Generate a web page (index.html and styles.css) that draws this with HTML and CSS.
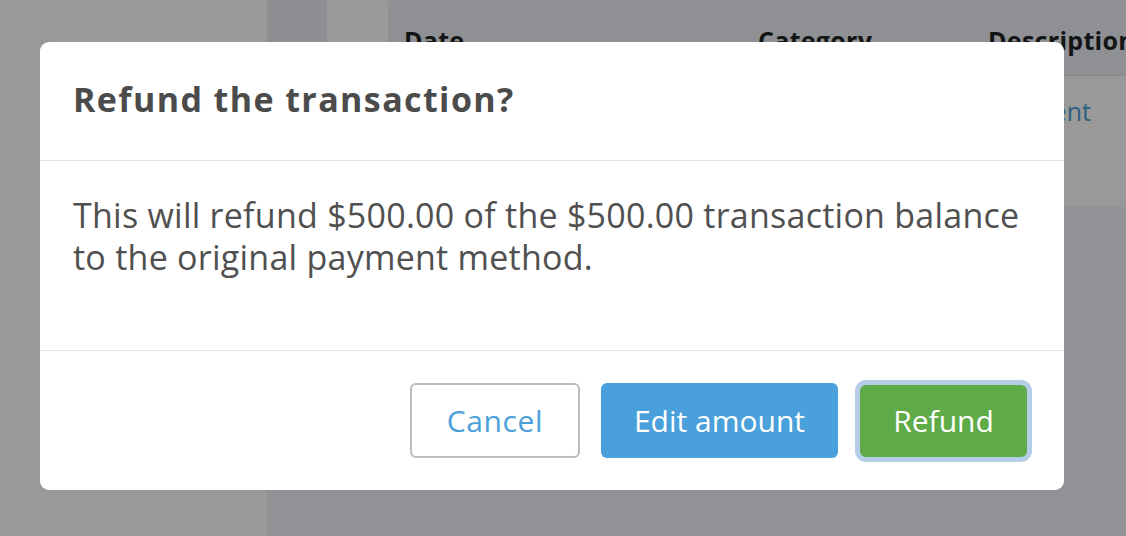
FILE: index.html
```html
<!DOCTYPE html>
<html lang="en">
<head>
<meta charset="utf-8">
<title>Refund the transaction?</title>
<link rel="stylesheet" href="styles.css">
</head>
<body>
<div class="app">
  <aside class="sidebar"></aside>
  <main class="main">
    <div class="rail"></div>
    <div class="pane"></div>
    <section class="card">
      <div class="card-head">
        <span class="col col-date">Date</span>
        <span class="col col-cat">Category</span>
        <span class="col col-desc">Description</span>
      </div>
      <div class="card-row">
        <span class="col col-date"></span>
        <span class="col col-cat"></span>
        <span class="col col-desc"><a class="link" href="#">Payment</a></span>
      </div>
    </section>
  </main>
</div>

<div class="overlay">
  <div class="modal" role="dialog" aria-labelledby="modal-title">
    <header class="modal-header">
      <h2 class="modal-title" id="modal-title">Refund the transaction?</h2>
    </header>
    <div class="modal-body">
      <p class="modal-text">This will refund $500.00 of the $500.00 transaction balance to the original payment method.</p>
    </div>
    <footer class="modal-footer">
      <button class="btn btn-cancel" type="button">Cancel</button>
      <button class="btn btn-edit" type="button">Edit amount</button>
      <button class="btn btn-refund" type="button">Refund</button>
    </footer>
  </div>
</div>
</body>
</html>
```

FILE: styles.css
```css
* { box-sizing: border-box; }

html, body {
  margin: 0;
  padding: 0;
  width: 1126px;
  height: 536px;
  overflow: hidden;
  font-family: "Open Sans", "Liberation Sans", sans-serif;
}

.app {
  display: flex;
  width: 1126px;
  height: 536px;
}

.sidebar {
  width: 267px;
  flex: none;
  background: #ffffff;
}

.main {
  flex: 1;
  display: flex;
  align-items: flex-start;
  background: #f1f3f8;
  overflow: hidden;
}

.rail {
  width: 60px;
  height: 200px;
  flex: none;
  background: #eceef3;
}

.pane {
  width: 61px;
  height: 200px;
  flex: none;
  background: #ffffff;
}

.card {
  flex: none;
  width: 900px;
  margin-top: 4px;
  background: #ffffff;
  border-radius: 5px 0 0 5px;
  overflow: hidden;
}

.card-head,
.card-row {
  display: flex;
  padding-left: 16px;
}

.card-head {
  height: 72px;
  background: #eef0f5;
  border-bottom: 1px solid #e0e3e9;
  align-items: center;
  font-weight: 700;
  font-size: 25px;
  letter-spacing: 0.3px;
  color: #1f2326;
  white-space: nowrap;
}

.card-row {
  height: 131px;
  padding-top: 18px;
  font-size: 25px;
}

.col-date { width: 354px; }
.col-cat { width: 230px; }
.col-desc { width: 300px; }

.link {
  color: #4a9fd6;
  text-decoration: none;
}

.overlay {
  position: fixed;
  inset: 0;
  background: rgba(0, 0, 0, 0.4);
  padding: 42px 62px 0 40px;
}

.modal {
  width: 1024px;
  height: 448px;
  background: #ffffff;
  border-radius: 9px;
  display: flex;
  flex-direction: column;
}

.modal-header {
  height: 119px;
  padding: 35px 33px 0;
  border-bottom: 1px solid #dce5eb;
}

.modal-title {
  margin: 0;
  font-size: 34px;
  line-height: 44px;
  letter-spacing: 1.4px;
  font-weight: 700;
  color: #4b4b4b;
}

.modal-body {
  height: 190px;
  padding: 33px 33px 0;
  border-bottom: 1px solid #dce5eb;
}

.modal-text {
  margin: 0;
  font-size: 34px;
  line-height: 42px;
  letter-spacing: 0.25px;
  color: #505050;
}

.modal-footer {
  flex: 1;
  display: flex;
  justify-content: flex-end;
  align-items: center;
  gap: 21px;
  padding: 0 37px 0 32px;
}

.btn {
  height: 75px;
  padding: 0;
  border: 0;
  border-radius: 6px;
  font-family: inherit;
  font-size: 30px;
  line-height: 1;
  cursor: pointer;
}

.btn-cancel {
  width: 170px;
  background: #ffffff;
  border: 2px solid #b9bdc1;
  color: #4aa0d9;
  letter-spacing: 0.6px;
}

.btn-edit {
  width: 237px;
  background: #4aa0da;
  color: #ffffff;
}

.btn-refund {
  width: 167px;
  height: 72px;
  margin-left: 1px;
  background: #5fab47;
  color: #ffffff;
  box-shadow: 0 0 0 5px #b5cde6;
}
```
